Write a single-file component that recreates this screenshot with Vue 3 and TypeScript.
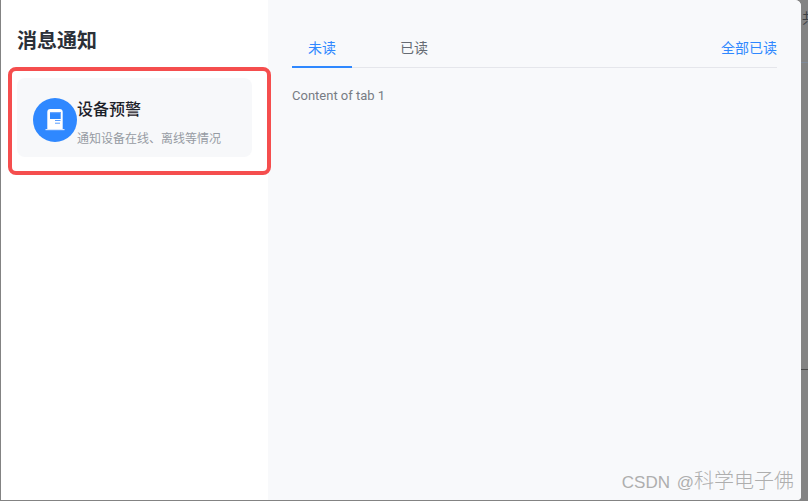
<script setup lang="ts">
const tabs = ['未读', '已读']
</script>

<template>
  <div class="page">
    <i class="bg-line bg-a"></i>
    <i class="bg-line bg-b"></i>
    <div class="dialog">
      <aside class="side">
        <h1 class="title">消息通知</h1>
        <div class="highlight">
          <div class="card">
            <div class="avatar">
              <svg class="device" width="22" height="22" viewBox="0 0 22 22">
                <path d="M3.300 3a3 3 0 0 1 3-3h9.400a3 3 0 0 1 3 3v17H3.300z" fill="#fff" />
                <rect x="1.500" y="20" width="19" height="1.200" fill="#d5e6ff" />
                <rect x="6" y="3" width="10.700" height="7" fill="#2f88ff" />
                <rect x="6" y="3" width="10.700" height="1.200" fill="#6aa7ff" />
                <rect x="11" y="11" width="5.500" height="1" fill="#5a9eff" />
                <rect x="11" y="13.700" width="5" height="1" fill="#5a9eff" />
              </svg>
            </div>
            <div class="card-text">
              <div class="card-title">设备预警</div>
              <div class="card-desc">通知设备在线、离线等情况</div>
            </div>
          </div>
        </div>
      </aside>
      <main class="content">
        <div class="tabbar">
          <div v-for="(t, i) in tabs" :key="t" class="tab" :class="{ active: i === 0 }">{{ t }}</div>
          <a class="read-all">全部已读</a>
        </div>
        <p class="pane">Content of tab 1</p>
      </main>
      <span class="mark">CSDN @<span class="mark-cjk">科学电子佛</span></span>
    </div>
    <span class="peek">共</span>
  </div>
</template>

<style>
html, body { margin: 0; background: #838383; }
</style>

<style scoped>
.page {
  width: 808px;
  height: 501px;
  overflow: hidden;
  position: relative;
  padding: 0 7px 1px 1px;
  box-sizing: border-box;
  font-family: "Noto Sans CJK SC", sans-serif;
}
.bg-line {
  position: absolute;
  right: 0;
  width: 7px;
  height: 1px;
}
.bg-a { top: 62px; background: #7f8a99; }
.bg-b { top: 369px; background: #4a4a4a; }
.dialog {
  position: relative;
  height: 100%;
  display: flex;
  border-radius: 0 6px 4px 0;
  overflow: hidden;
  background: #fff;
}
.side {
  width: 267px;
  flex: none;
  position: relative;
  z-index: 1;
  box-sizing: border-box;
  padding: 28px 0 0 7px;
}
.title {
  margin: 0 0 15px 9px;
  font-size: 20px;
  line-height: 24px;
  font-weight: 700;
  color: #2b3038;
}
.highlight {
  width: 263px;
  height: 108px;
  box-sizing: border-box;
  border: 4px solid #f54e4e;
  border-radius: 8px;
  padding: 7px 15px 0 5px;
}
.card {
  height: 79px;
  background: #f7f8fa;
  border-radius: 8px;
  display: flex;
  align-items: flex-start;
  padding: 20px 0 0 16px;
  box-sizing: border-box;
}
.avatar {
  width: 44px;
  height: 44px;
  flex: none;
  border-radius: 50%;
  background: #2f88ff;
  display: flex;
  align-items: flex-start;
  justify-content: center;
}
.device {
  margin-top: 11px;
}
.card-title {
  font-size: 16px;
  line-height: 20px;
  font-weight: 500;
  color: #1d2129;
}
.card-desc {
  margin-top: 11px;
  font-size: 12px;
  line-height: 18px;
  color: #969ba3;
}
.content {
  flex: 1;
  background: #f8f9fb;
  padding: 29px 24px 0 24px;
  min-width: 0;
}
.tabbar {
  display: flex;
  align-items: flex-start;
  height: 38px;
  border-bottom: 1px solid #e5e6eb;
  font-size: 14px;
}
.tab {
  width: 60px;
  height: 39px;
  line-height: 36px;
  box-sizing: border-box;
  text-align: center;
  color: #666b73;
  margin-right: 32px;
  border-bottom: 2px solid transparent;
}
.tab.active {
  color: #2f88ff;
  border-bottom-color: #2f88ff;
}
.read-all {
  margin-left: auto;
  color: #2f88ff;
  line-height: 36px;
}
.pane {
  margin: 19px 0 0;
  font-family: Roboto, sans-serif;
  font-size: 13px;
  line-height: 18px;
  color: #777c84;
}
.mark {
  position: absolute;
  right: 7px;
  bottom: 5px;
  font-size: 17px;
  line-height: 24px;
  word-spacing: 2px;
  color: #aeaeae;
  font-family: "Liberation Sans", "Noto Sans CJK SC", sans-serif;
}
.mark-cjk {
  font-size: 20px;
  font-weight: 300;
}
.peek {
  position: absolute;
  right: -8px;
  top: 7px;
  font-size: 14px;
  color: #3a3f45;
}
</style>
